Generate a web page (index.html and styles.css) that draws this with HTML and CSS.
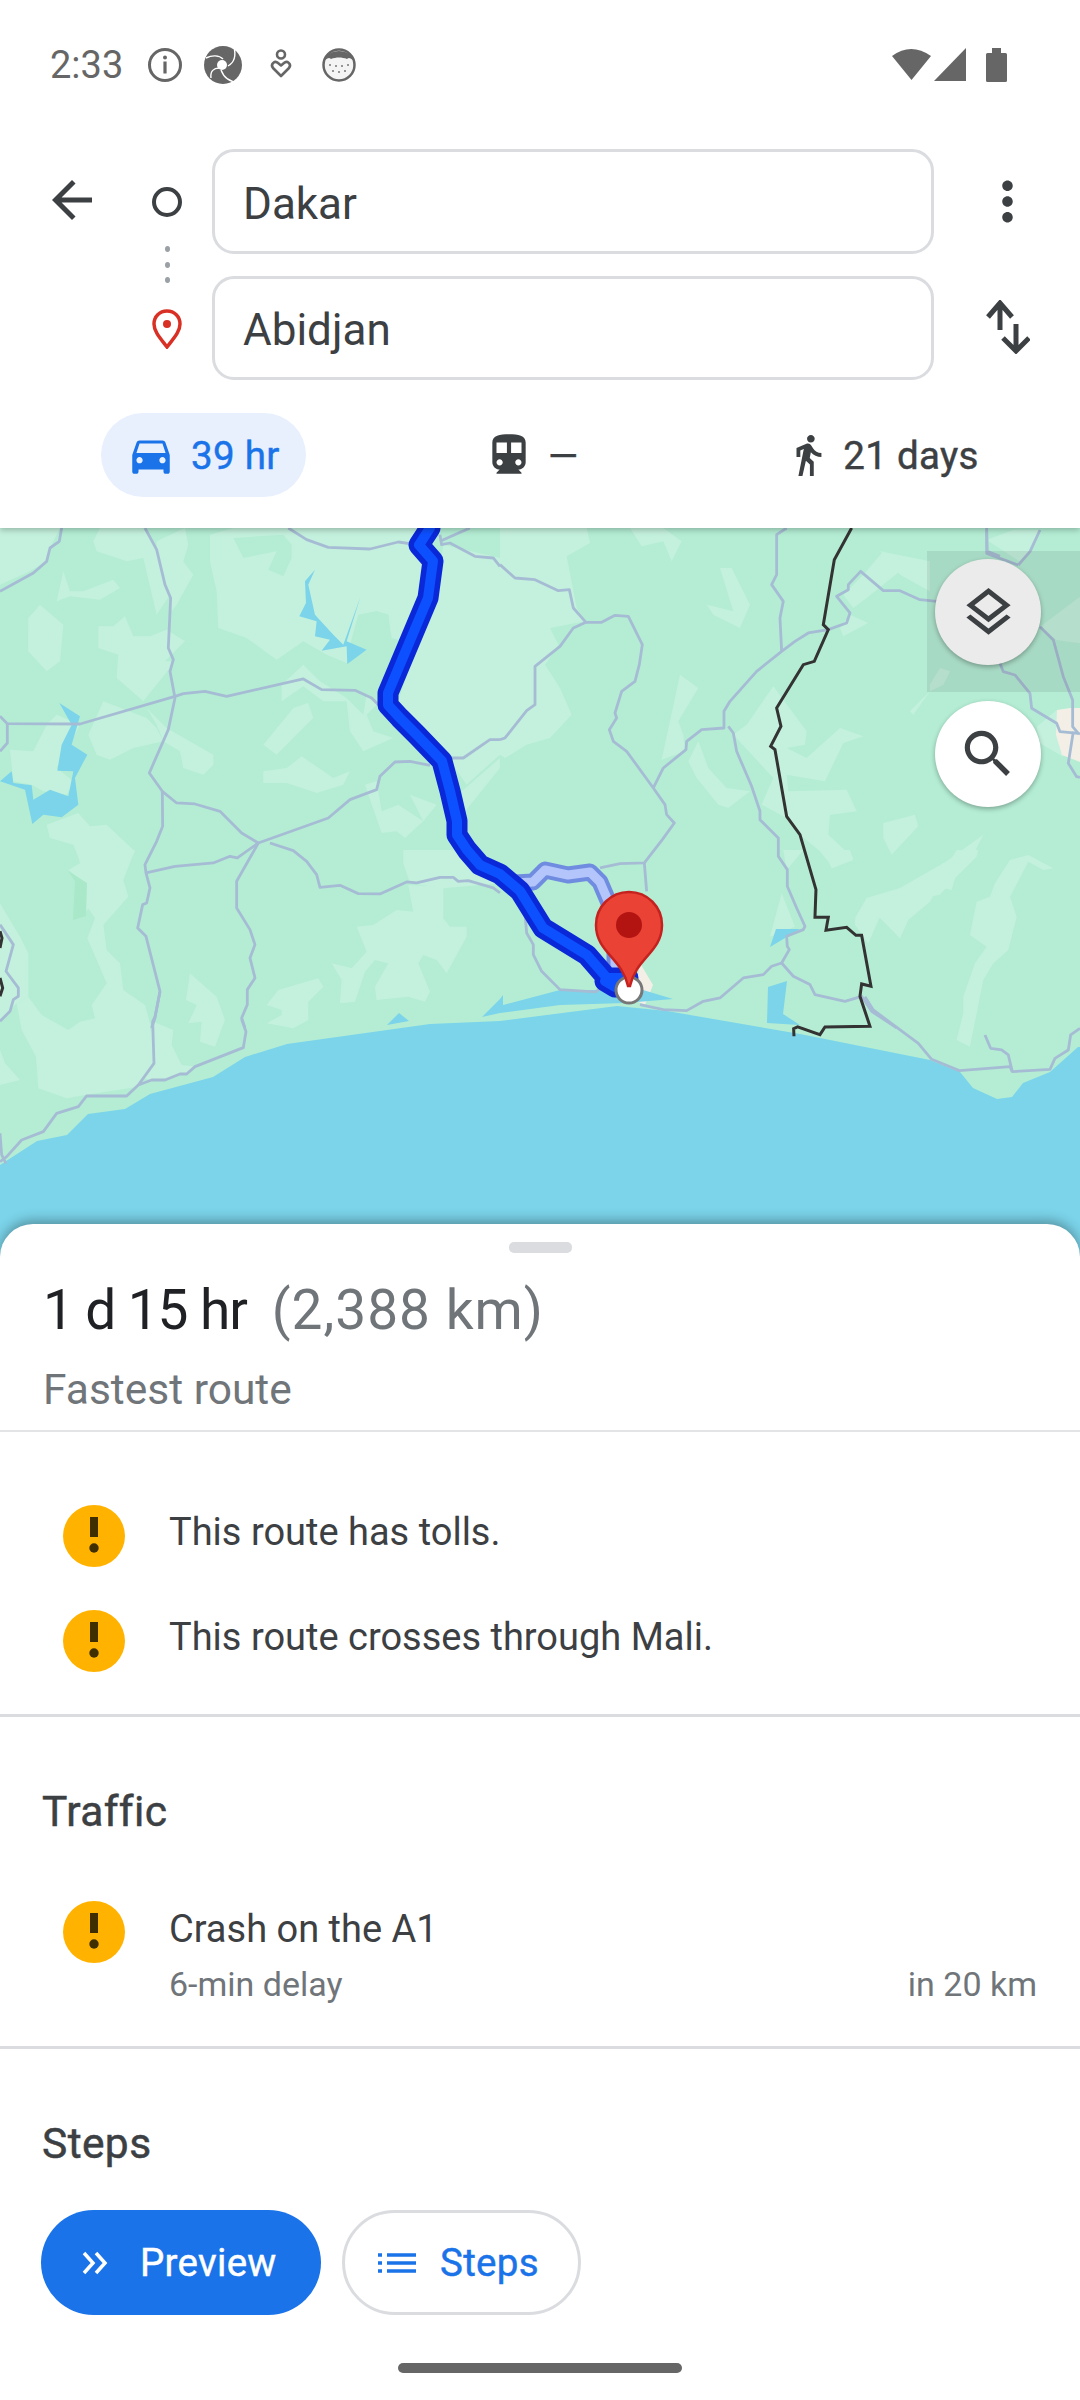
FILE: index.html
```html
<!DOCTYPE html>
<html lang="en">
<head>
<meta charset="utf-8">
<title>Directions</title>
<link rel="stylesheet" href="styles.css">
</head>
<body>
<div class="screen">
  <header class="header">
    <div class="status">
      <span class="time">2:33</span>
      <svg class="st" viewBox="0 0 40 40"><circle cx="20" cy="20" r="15.500" fill="none" stroke="#666" stroke-width="3"/><circle cx="20" cy="12.500" r="2" fill="#666"/><rect x="18.400" y="16.500" width="3.200" height="12" fill="#666"/></svg>
      <svg class="st" viewBox="0 0 40 40"><circle cx="20" cy="20" r="19" fill="#666"/><circle cx="19" cy="20" r="5" fill="#fff"/><path d="M3 13c6-3 13-3 17 1M31 2c2 8 1 15-6 19M8 33c-1-7 3-10 8-10M18 25c3 8 9 12 17 12" fill="none" stroke="#fff" stroke-width="1.400"/></svg>
      <svg class="st" viewBox="0 0 40 40"><circle cx="20" cy="9.500" r="4" fill="none" stroke="#666" stroke-width="2.600"/><path d="M20 31l-8-8c-3-4 2-8 5-5l3 2.500 3-2.500c3-3 8 1 5 5z" fill="none" stroke="#666" stroke-width="2.600" stroke-linejoin="round"/></svg>
      <svg class="st" viewBox="0 0 40 40"><circle cx="20" cy="20" r="15.500" fill="#f4f4f4" stroke="#666" stroke-width="2.500"/><path d="M6 15c3-12 25-12 28 0-3-2-4-3-6-1-5-2-11-2-16 0-2-2-3-1-6 1z" fill="#666"/><g fill="#777"><circle cx="11" cy="20" r="1"/><circle cx="17" cy="21" r="1"/><circle cx="23" cy="21" r="1"/><circle cx="29" cy="20" r="1"/><circle cx="14" cy="26" r="1"/><circle cx="20" cy="27" r="1"/><circle cx="26" cy="26" r="1"/></g></svg>
      <svg class="st-right" viewBox="0 0 115 34"><path d="M0 8Q19-6 39 8L19.500 32z" fill="#666"/><path d="M74 0V33H42z" fill="#666"/><path d="M94 6.500A1.500 1.500 0 0 1 95.500 5H100V0h9v5h4.500A1.500 1.500 0 0 1 115 6.500V32.500a1.500 1.500 0 0 1-1.500 1.500h-18A1.500 1.500 0 0 1 94 32.500z" fill="#666"/></svg>
    </div>

    <div class="route">
      <div class="back"><svg viewBox="0 0 24 24"><path d="M20 11H7.830l5.590-5.590L12 4l-8 8 8 8 1.410-1.410L7.830 13H20v-2z"/></svg></div>
      <div class="stops">
        <span class="origin"></span>
        <span class="dots"><i></i><i></i><i></i></span>
        <svg class="dest" viewBox="0 0 30 40"><path d="M15 2C7.500 2 2 7.800 2 15c0 8 7 15 13 23 6-8 13-15 13-23C28 7.800 22.500 2 15 2z" fill="#fff" stroke="#d93025" stroke-width="3.500"/><circle cx="15" cy="15" r="4" fill="#d93025"/></svg>
      </div>
      <div class="fields">
        <div class="field">Dakar</div>
        <div class="field">Abidjan</div>
      </div>
      <div class="actions">
        <svg class="more" viewBox="0 0 24 24"><path d="M12 8c1.100 0 2-.9 2-2s-.9-2-2-2-2 .9-2 2 .9 2 2 2zm0 2c-1.100 0-2 .9-2 2s.9 2 2 2 2-.9 2-2-.9-2-2-2zm0 6c-1.100 0-2 .9-2 2s.9 2 2 2 2-.9 2-2-.9-2-2-2z"/></svg>
        <svg class="swap" viewBox="0 0 46 54"><path d="M16 30V3M4 17L16 3l12 14M32 24v27M19 38l13 13 13-13" fill="none" stroke="#3c4043" stroke-width="5"/></svg>
      </div>
    </div>

    <div class="tabs">
      <div class="tab tab-on">
        <svg viewBox="0 0 24 24"><path d="M18.920 6.010C18.720 5.420 18.160 5 17.500 5h-11c-.66 0-1.210.42-1.420 1.010L3 12v8c0 .55.45 1 1 1h1c.55 0 1-.45 1-1v-1h12v1c0 .55.45 1 1 1h1c.55 0 1-.45 1-1v-8l-2.080-5.990zM6.500 16c-.83 0-1.500-.67-1.500-1.500S5.670 13 6.500 13s1.500.67 1.500 1.500S7.330 16 6.500 16zm11 0c-.83 0-1.500-.67-1.500-1.500s.67-1.500 1.500-1.500 1.500.67 1.500 1.500-.67 1.500-1.500 1.500zM5 11l1.500-4.500h11L19 11H5z"/></svg>
        <span>39 hr</span>
      </div>
      <div class="tab tab-transit">
        <svg viewBox="0 0 24 24"><path d="M12 2c-4.420 0-8 .5-8 4v9.500C4 17.430 5.570 19 7.500 19L6 20.500v.5h12v-.5L16.500 19c1.930 0 3.500-1.570 3.500-3.500V6c0-3.500-3.580-4-8-4zM7.500 17c-.83 0-1.500-.67-1.500-1.500S6.670 14 7.500 14s1.500.67 1.500 1.500S8.330 17 7.500 17zm3.500-6H6V6h5v5zm5.500 6c-.83 0-1.500-.67-1.500-1.500s.67-1.500 1.500-1.500 1.500.67 1.500 1.500-.67 1.500-1.500 1.500zm1.500-6h-5V6h5v5z"/></svg>
        <span>—</span>
      </div>
      <div class="tab tab-walk">
        <svg viewBox="0 0 24 24"><path d="M13.500 5.500c1.100 0 2-.9 2-2s-.9-2-2-2-2 .9-2 2 .9 2 2 2zM9.800 8.900L7 23h2.100l1.800-8 2.100 2v6h2v-7.500l-2.100-2 .6-3C14.800 12 16.800 13 19 13v-2c-1.900 0-3.500-1-4.300-2.400l-1-1.600c-.4-.6-1-1-1.700-1-.3 0-.5.1-.8.100L6 8.300V13h2V9.600l1.800-.7"/></svg>
        <span>21 days</span>
      </div>
    </div>
  </header>

  <main class="map">
    <svg class="map-art" viewBox="0 528 1080 740" preserveAspectRatio="none">
      <rect x="0" y="528" width="1080" height="740" fill="#b4edd4"/>

      <g class="light" transform="translate(0 528) scale(.3333)">
        <polygon points="0,0 180,0 150,60 140,100 90,130 0,170"/>
        <polygon points="280,40 300,0 430,0 475,70 510,200 470,260 430,90 380,100 290,70"/>
        <polygon points="470,40 555,0 565,50 550,100 580,140 530,230 515,250 510,210 490,160 470,80"/>
        <polygon points="170,220 190,130 210,190 250,190 340,155 360,180 300,215 210,205"/>
        <polygon points="85,270 120,230 190,290 180,400 140,430 85,370"/>
        <polygon points="295,295 340,295 375,265 400,325 450,325 500,305 555,340 495,400 515,400 510,420 430,520 350,450 355,380 295,360"/>
        <polygon points="630,20 700,0 1250,0 1245,70 1275,110 1255,210 1210,340 1175,330 1165,260 1130,250 1075,260 1050,350 1100,365 1040,405 980,380 910,340 830,395 740,330 655,300 650,190 630,100"/>
        <polygon points="1330,50 1500,90 1500,680 1400,770 1345,690 1265,600 1195,520 1320,130"/>
        <polygon points="440,540 500,600 640,680 640,710 610,740 550,720 540,670 490,640 470,590"/>
        <polygon points="30,665 100,670 140,590 170,560 240,590 210,650 170,720 220,760 200,800 130,790 95,770 40,760"/>
        <polygon points="265,620 310,520 440,570 470,600 490,640 400,660 330,695 290,680"/>
        <polygon points="140,890 235,855 270,895 320,890 405,970 390,1000 240,1000 220,950 150,930"/>
        <polygon points="790,650 880,540 925,525 940,570 900,610 830,680"/>
        <polygon points="790,730 860,720 905,685 1000,750 1050,730 1030,770 950,795 860,765 790,765"/>
        <polygon points="845,520 845,470 910,410 960,460 1040,510 1090,560 1100,500 1130,530 1100,560 1120,610 1180,630 1090,670 1050,610 1040,520 970,520 910,475"/>
        <polygon points="1095,770 1130,760 1145,850 1195,830 1270,880 1215,930 1190,910 1145,915"/>
        <polygon points="1230,800 1310,830 1270,880"/>
        <polygon points="1385,790 1500,690 1500,720 1420,820 1395,850"/>
      </g>
      <g fill="#b4edd4" transform="translate(0 528) scale(.3333)">
        <polygon points="700,30 850,20 875,50 875,90 850,145 805,125 830,70 730,90"/>
        <polygon points="1080,260 1130,250 1165,260 1170,330 1100,340 1075,300"/>
      </g>
      <g class="light" transform="translate(0 850) scale(.3333)">
        <polygon points="230,0 405,0 370,90 385,140 310,225 320,300 360,340 370,420 435,465 450,520 460,640 415,710 255,735 200,745 115,715 108,620 65,540 50,460 85,440 125,495 205,540 240,515 285,505 275,465 320,400 262,265 285,205 265,175 255,190 258,100 205,60 240,40"/>
        <polygon points="0,160 60,260 85,310 85,440 50,460 0,510"/>
        <polygon points="0,600 15,640 60,690 0,705"/>
        <polygon points="460,515 520,540 515,585 545,645 590,650 555,670 490,690 450,690 405,675 415,640 440,600"/>
        <polygon points="570,370 650,440 675,510 645,590 600,575 605,515 565,520 590,465 558,450"/>
        <polygon points="800,465 835,420 955,385 970,410 925,455 925,510 880,535 800,520 845,495 845,480"/>
        <polygon points="1070,230 1120,225 1190,180 1240,185 1225,105 1330,110 1330,205 1350,230 1400,230 1400,260 1340,370 1310,330 1270,315 1255,340 1290,425 1275,455 1225,440 1130,450 1125,410 1165,340 1125,330 1095,365 1065,455 1020,460 1025,390 995,340 1055,355 1100,305"/>
        <polygon points="1210,0 1360,0 1500,100 1330,115 1230,100 1210,40"/>
      </g>
      <g class="light" transform="translate(500 528) scale(.3333)">
        <polygon points="0,0 260,0 270,45 200,85 230,240 255,280 150,300 175,350 135,410 180,480 215,560 150,630 80,650 15,690 0,680"/>
        <polygon points="390,0 490,0 545,40 515,100 490,40 425,55"/>
        <polygon points="660,120 695,120 750,230 720,300 640,260 620,230 700,250"/>
        <polygon points="485,695 540,440 595,480 535,580 550,620 555,670"/>
        <polygon points="565,700 595,640 625,720 680,780 750,790 685,840 655,830 590,750"/>
        <polygon points="740,590 820,475 920,610 915,650 860,660 920,690 1020,600 1090,625 1030,645 975,760 860,740 865,790 1040,785 1070,850 925,870 990,860 985,920 1060,990 1000,1020 960,970 900,920 860,870 785,830 820,750 700,620"/>
        <polygon points="1150,885 1245,860 1255,895 1175,980 1150,930"/>
        <polygon points="1020,300 1050,260 1105,285 1030,325"/>
        <polygon points="1030,200 1090,140 1150,70 1200,130 1100,210 1060,240"/>
        <polygon points="1140,70 1290,100 1290,190 1200,140"/>
        <polygon points="1290,470 1320,420 1350,430 1330,470 1290,490"/>
        <polygon points="1230,550 1290,490 1240,560"/>
        <polygon points="1065,1170 1100,1110 1200,1080 1340,1000 1450,920 1410,1000 1320,1100 1210,1120 1200,1230 1140,1170 1090,1190"/>
      </g>
      <g class="light" transform="translate(700 850) scale(.3333)">
        <polygon points="465,210 510,145 560,140 640,100 660,80 720,80 770,0 835,0 830,20 765,85 755,120 715,110 690,155 625,210 600,265 540,200 505,280 465,225"/>
        <polygon points="790,440 825,340 860,290 810,255 830,155 870,140 885,100 930,30 985,15 1060,55 1030,60 985,35 930,140 950,200 925,300 880,340 850,390 810,590 770,570 790,490"/>
        <polygon points="210,260 245,130 285,230"/>
        <polygon points="250,0 310,0 260,60"/>
        <polygon points="370,0 450,0 460,30 395,55"/>
      </g>
      <g class="light" transform="translate(880 530) scale(.3333)">
        <polygon points="320,30 400,0 480,0 450,60 420,95"/>
        <polygon points="480,290 600,200 600,340 530,330"/>
        <polygon points="470,590 530,540 540,610 550,680 480,640"/>
      </g>

      <polygon fill="#a9e8c8" points="68,871 87,883 86,916 73,920 75,881"/>
      <polygon fill="#f3efe6" points="1057,710 1070,708 1080,708 1080,762 1062,755 1056,735"/>
      <polygon fill="#f3efe6" points="640,963 653,985 645,1005 634,1000"/>

      <g fill="#7bd4ea">
        <polygon points="0,1165 37,1141 67,1135 88,1114 125,1109 150,1094 213,1077 245,1057 287,1044 430,1024 500,1021 617,1006 667,1011 800,1034 930,1060 960,1072 973,1088 997,1099 1012,1097 1023,1083 1050,1072 1078,1047 1080,1047 1080,1268 0,1268"/>
        <polygon points="482,1017 500,999 503,995 503,1005 560,990 643,990 673,999 625,1003 560,1005 500,1013"/>
        <polygon points="387,1025 399,1013 409,1021"/>
        <polygon points="770,947 776,929 800,929"/>
        <polygon points="768,987 787,981 783,1014 800,1025 767,1023"/>
      </g>
      <g fill="#7bd4ea" transform="translate(0 528) scale(.3333)">
        <polygon points="915,160 945,125 925,170 945,260 1000,320 1030,350 1082,205 1040,340 1100,365 1042,408 1040,355 965,368 990,335 945,325 950,280 898,265 918,225"/>
        <polygon points="178,525 240,565 215,650 262,680 225,750 235,830 185,868 130,860 97,888 75,785 0,760 35,730 40,765 95,772 100,815 150,785 205,805 220,730 172,728 185,650 215,590"/>
      </g>

      <g class="roads" transform="translate(0 528) scale(.3333)">
        <polyline points="185,0 178,40 150,60 140,100 100,135 0,190"/>
        <polyline points="435,0 470,65 495,170 512,210 505,360 520,395 510,430 525,510 505,605 448,735 487,790 530,825 585,828 660,850 725,915 775,945 710,1060 710,1140 750,1205 765,1250 750,1290 765,1350 742,1385 742,1430 725,1470 735,1500"/>
        <polyline points="0,565 22,587 240,588 525,505 550,497 615,490 680,505 910,453 965,485 1065,487 1115,510 1145,540"/>
        <polyline points="22,587 22,645 0,670"/>
        <polyline points="487,790 488,895 470,940 435,1010 438,1035 450,1080 440,1125 428,1130 413,1200 438,1225 480,1390 465,1470 455,1500"/>
        <polyline points="438,1035 525,1015 640,1005 690,985 712,990 775,945 985,870 1050,815 1130,785 1140,745 1185,702 1230,700 1290,712"/>
        <polyline points="810,945 880,968 920,1000 950,1040 960,1078 1020,1072 1075,1097 1140,1098 1220,1062 1250,1065 1320,1048 1360,1048 1375,1060 1405,1058 1480,1080 1500,1095"/>
        <polyline points="865,0 920,35 985,58 1110,63 1195,42 1250,50"/>
        <polyline points="1320,20 1325,50 1350,45 1425,85 1480,90 1500,115"/>
        <polyline points="1320,40 1410,0"/>
        <polyline points="1350,690 1390,690 1470,635 1500,635"/>
        <polyline points="0,1190 40,1250 18,1330 55,1380 55,1405 40,1415 30,1450 0,1480"/>
      </g>
      <g class="roads" transform="translate(0 850) scale(.3333)">
        <polyline points="480,425 465,500 458,515 462,640 415,705 380,738 260,738 235,770 170,790 130,845 65,870 20,920 0,935"/>
        <polyline points="415,705 455,690 495,690 540,672 560,672 585,650 730,593 738,545 725,508"/>
        <polyline points="0,850 5,915 18,940"/>
      </g>
      <g class="roads" transform="translate(500 528) scale(.3333)">
        <polyline points="0,110 45,150 105,155 175,188 208,185 220,240 258,283 305,283 345,262 385,265 427,350 418,410 405,460 365,490 345,555 350,570 328,605 340,640 380,670 460,780 495,830 500,860 523,885 487,935 433,1005 360,1007 300,1020"/>
        <polyline points="258,283 220,300 180,355 105,415 105,530 80,548 15,630 0,635"/>
        <polyline points="433,1005 440,1090"/>
        <polyline points="460,780 490,720 558,665 560,640 605,605 672,600 672,550 690,520 770,430 845,370 885,340 925,315 985,305 1040,285 1050,255 1010,205 1045,185 1045,170 1082,130 1150,188 1200,188 1260,215 1310,220"/>
        <polyline points="845,370 840,270 850,220 815,170 830,140 830,20 860,0"/>
        <polyline points="685,595 700,615 710,670 755,775 780,850 780,875 835,930 835,985 862,1025 862,1075 890,1140 915,1195 910,1205 860,1225 862,1255 868,1265 845,1305 815,1315 790,1340 730,1350 660,1410 610,1420 560,1448 490,1445 420,1430"/>
        <polyline points="845,1305 880,1345 930,1370 945,1400 1035,1420 1085,1405 1115,1450 1190,1500"/>
        <polyline points="75,1160 80,1215 100,1250 100,1280 125,1330 180,1385 285,1392 305,1380"/>
        <polyline points="1460,0 1462,70 1500,85"/>
      </g>
      <g class="roads" transform="translate(700 850) scale(.3333)">
        <polyline points="495,440 520,480 655,580 695,628 778,662 930,650 937,665 1050,658 1065,625 1105,600 1112,555 1140,535"/>
        <polyline points="855,555 872,595 905,600 925,615 937,665"/>
      </g>
      <g class="roads" transform="translate(880 530) scale(.3333)">
        <polyline points="415,105 450,65 480,0"/>
        <polyline points="320,0 320,70 415,105"/>
        <polyline points="480,290 520,330 550,440 578,510 578,590 595,610 600,612"/>
        <polyline points="360,400 370,425 405,435 450,490 455,535 530,580 540,605 595,610"/>
        <polyline points="580,605 565,700 590,740 600,742"/>
      </g>
      <g class="border" transform="translate(500 528) scale(.3333)">
        <polyline points="1055,0 1003,95 970,290 985,305 943,400 910,410 830,540 843,595 812,655 825,665 860,865 900,920 948,1085 945,1168 985,1168 978,1207 1040,1198 1068,1222 1085,1222 1113,1375 1085,1368 1080,1405 1110,1495 975,1497 960,1520 893,1497 881,1502 882,1525"/>
      </g>
      <g class="border" transform="translate(0 528) scale(.3333)">
        <polyline points="0,1210 6,1230 0,1260"/>
        <polyline points="0,1350 8,1380 0,1405"/>
      </g>

      <polyline class="alt-out" points="515,883 533,882 545,870 568,875 590,872 600,882 615,917 615,973"/>
      <polyline class="alt-in" points="515,883 533,882 545,870 568,875 590,872 600,882 615,917 615,973"/>
      <polyline class="main-out" points="430,528 419,545 433,561 428,598 388,693 388,705 400,718 417,735 442,761 450,791 457,821 457,835 467,850 480,865 500,874 520,891 543,928 587,955 607,978 628,978 605,981 615,987"/>
      <polyline class="main-in" points="430,528 419,545 433,561 428,598 388,693 388,705 400,718 417,735 442,761 450,791 457,821 457,835 467,850 480,865 500,874 520,891 543,928 587,955 607,978 628,978 605,981 615,987"/>
      <circle cx="629" cy="990" r="13" fill="#fff" stroke="#777" stroke-width="3"/>
      <path d="M629 892c-18.500 0-33 15-33 33 0 27 26 33 32 61h2c6-28 32-34 32-61 0-18-14.500-33-33-33z" fill="#ea4335" stroke="#c5221f" stroke-width="2.500"/>
      <circle cx="629" cy="925" r="13" fill="#b31412"/>
    </svg>
    <div class="layer-wrap">
      <button class="fab fab-layers"><svg viewBox="0 0 24 24"><path d="M11.990 18.540l-7.370-5.730L3 14.070l9 7 9-7-1.630-1.270-7.380 5.740zM12 16l7.360-5.730L21 9l-9-7-9 7 1.630 1.270L12 16zm0-11.470L17.740 9 12 13.470 6.260 9 12 4.530z"/></svg></button>
    </div>
    <button class="fab fab-search"><svg viewBox="0 0 24 24"><path d="M15.500 14h-.79l-.28-.27C15.410 12.590 16 11.110 16 9.500 16 5.910 13.090 3 9.500 3S3 5.910 3 9.500 5.910 16 9.500 16c1.610 0 3.090-.59 4.230-1.570l.27.28v.79l5 4.990L20.490 19l-4.990-5zm-6 0C7.010 14 5 11.990 5 9.500S7.010 5 9.500 5 14 7.010 14 9.500 11.990 14 9.500 14z"/></svg></button>
  </main>

  <section class="sheet">
    <div class="handle"></div>
    <div class="summary"><span class="dur">1 d 15 hr</span><span class="dist">(2,388 km)</span></div>
    <div class="sub">Fastest route</div>
    <div class="rule-thin"></div>

    <div class="alerts">
      <div class="alert">
        <svg class="warn" viewBox="0 0 62 62"><circle cx="31" cy="31" r="31" fill="#ffb300"/><rect x="27" y="12" width="8" height="20" fill="#3f2e00"/><circle cx="31" cy="43" r="4.700" fill="#3f2e00"/></svg>
        <span class="alert-text">This route has tolls.</span>
      </div>
      <div class="alert">
        <svg class="warn" viewBox="0 0 62 62"><circle cx="31" cy="31" r="31" fill="#ffb300"/><rect x="27" y="12" width="8" height="20" fill="#3f2e00"/><circle cx="31" cy="43" r="4.700" fill="#3f2e00"/></svg>
        <span class="alert-text">This route crosses through Mali.</span>
      </div>
    </div>
    <div class="rule"></div>

    <h2 class="head head-traffic">Traffic</h2>
    <div class="incident">
      <svg class="warn" viewBox="0 0 62 62"><circle cx="31" cy="31" r="31" fill="#ffb300"/><rect x="27" y="12" width="8" height="20" fill="#3f2e00"/><circle cx="31" cy="43" r="4.700" fill="#3f2e00"/></svg>
      <div class="incident-body">
        <div class="alert-text">Crash on the A1</div>
        <div class="incident-meta"><span>6-min delay</span><span>in 20 km</span></div>
      </div>
    </div>
    <div class="rule rule-b"></div>

    <h2 class="head head-steps">Steps</h2>
    <div class="buttons">
      <button class="btn btn-primary"><svg viewBox="0 0 30 24"><path d="M3 2l9 10-9 10M15 2l9 10-9 10" fill="none" stroke="#fff" stroke-width="3.500"/></svg>Preview</button>
      <button class="btn btn-outline"><svg viewBox="0 0 38 22"><path d="M9 3h29M9 11h29M9 19h29" stroke="#1a73e8" stroke-width="3.500"/><path d="M0 3h4M0 11h4M0 19h4" stroke="#1a73e8" stroke-width="3.500"/></svg>Steps</button>
    </div>
    <div class="home"></div>
  </section>
</div>
</body>
</html>
```
FILE: styles.css
```css
* { box-sizing: border-box; }
html, body { margin: 0; padding: 0; }
body { font-family: Roboto, "Liberation Sans", sans-serif; background: #fff; }
.screen { width: 1080px; height: 2400px; overflow: hidden; display: flex; flex-direction: column; position: relative; background: #fff; }

.header { height: 528px; flex: none; background: #fff; position: relative; z-index: 3; box-shadow: 0 2px 6px rgba(0,0,0,.25); }
.status { height: 130px; display: flex; align-items: center; padding-left: 50px; }
.time { width: 95px; font-size: 38px; color: #666; }
.st { width: 40px; height: 40px; margin-right: 18px; }
.st-right { width: 115px; height: 34px; margin-left: auto; margin-right: 73px; }

.route { display: flex; padding-top: 19px; height: 250px; }
.back { width: 122px; padding: 21px 0 0 42px; flex: none; }
.back svg { width: 60px; height: 60px; fill: #3c4043; display: block; }
.stops { width: 90px; flex: none; display: flex; flex-direction: column; align-items: center; padding-top: 38px; }
.origin { width: 30px; height: 30px; border: 4px solid #3c4043; border-radius: 50%; }
.dots { display: flex; flex-direction: column; gap: 9.500px; margin-top: 29px; }
.dots i { width: 5px; height: 6px; border-radius: 50%; background: #9aa0a6; display: block; }
.dest { width: 30px; height: 40px; margin-top: 26px; }
.fields { width: 722px; flex: none; display: flex; flex-direction: column; gap: 22px; }
.field { height: 105px; border: 3.500px solid #dadce0; border-radius: 22px; padding: 5px 0 0 28px; display: flex; align-items: center; font-size: 44px; color: #3c4043; }
.actions { flex: 1; display: flex; flex-direction: column; align-items: center; }
.more { width: 63px; height: 63px; fill: #3c4043; margin-top: 21px; }
.swap { width: 46px; height: 54px; margin-top: 67px; }

.tabs { display: flex; margin-top: 33px; padding-left: 101px; height: 84px; }
.tab { display: flex; align-items: center; font-size: 38.500px; font-weight: 400; letter-spacing: .3px; -webkit-text-stroke: .45px currentColor; color: #3c4043; }
.tab-on { width: 205px; background: #e8f0fe; border-radius: 42px; color: #1a73e8; padding-left: 25px; gap: 15px; }
.tab svg { width: 50px; height: 50px; fill: currentColor; flex: none; }
.tab-transit { margin-left: 178px; gap: 14px; }
.tab-walk { margin-left: 207px; gap: 12px; }
.tab-walk svg { width: 46px; height: 46px; }

.map { height: 740px; margin-bottom: -44px; flex: none; position: relative; z-index: 1; }
.map-art { display: block; width: 1080px; height: 740px; }
.light { fill: #c4f1dd; }
.roads polyline { fill: none; stroke: #a6bcd4; stroke-width: 2.800; vector-effect: non-scaling-stroke; stroke-linejoin: round; }
.border polyline { fill: none; stroke: #333; stroke-width: 3; vector-effect: non-scaling-stroke; }
.alt-out, .alt-in, .main-out, .main-in { fill: none; stroke-linejoin: round; stroke-linecap: round; }
.alt-out { stroke: #6f8ce0; stroke-width: 17; }
.alt-in { stroke: #b4c5fb; stroke-width: 9; }
.main-out { stroke: #0a28d8; stroke-width: 21; }
.main-in { stroke: #0d50ff; stroke-width: 10; }

.layer-wrap { position: absolute; left: 927px; top: 23px; width: 153px; height: 141px; background: rgba(60,60,60,.1); padding: 8px 0 0 8px; }
.fab { width: 106px; height: 106px; border: 0; border-radius: 50%; padding: 0; display: flex; align-items: center; justify-content: center; box-shadow: 0 2px 5px rgba(0,0,0,.3); }
.fab svg { fill: #3c4043; display: block; }
.fab-layers { background: #ebebeb; }
.fab-layers svg { width: 59px; height: 59px; }
.fab-search { position: absolute; left: 935px; top: 173px; background: #fff; }
.fab-search svg { width: 62px; height: 62px; }

.sheet { flex: 1; background: #fff; position: relative; z-index: 2; border-radius: 33px 33px 0 0; box-shadow: 0 -4px 12px rgba(0,0,0,.3); display: flex; flex-direction: column; }
.handle { width: 63px; height: 11px; border-radius: 5px; background: #dadce0; margin: 18px auto 0; flex: none; }
.summary { margin-top: 25px; padding-left: 43px; display: flex; gap: 25px; font-size: 55px; line-height: 64px; }
.dur { color: #202124; letter-spacing: -1.100px; }
.dist { color: #70757a; letter-spacing: 1px; }
.sub { margin-top: 22px; padding-left: 43px; font-size: 42.500px; line-height: 52px; color: #70757a; }
.rule-thin { height: 2px; background: #e3e4e6; margin-top: 14px; flex: none; }
.rule { height: 3px; background: #dadce0; margin-top: 42px; flex: none; }
.rule-b { margin-top: 40px; }
.alerts { padding: 73px 43px 0 63px; display: flex; flex-direction: column; gap: 43px; }
.alert { display: flex; align-items: flex-start; gap: 44px; height: 62px; }
.warn { width: 62px; height: 62px; flex: none; display: block; }
.alert-text { font-size: 38px; line-height: 52px; color: #3c4043; padding-top: 1px; }
.head { margin: 0; padding-left: 42px; font-size: 42.500px; font-weight: 400; letter-spacing: .4px; -webkit-text-stroke: .5px currentColor; line-height: 56px; color: #3c4043; }
.head-traffic { margin-top: 67px; }
.head-steps { margin-top: 67px; }
.incident { display: flex; gap: 44px; margin-top: 61px; padding: 0 43px 0 63px; }
.incident-body { flex: 1; padding-top: 1px; }
.incident-meta { display: flex; justify-content: space-between; margin-top: 7px; font-size: 34px; line-height: 44px; color: #70757a; }
.buttons { display: flex; gap: 21px; padding-left: 41px; margin-top: 38px; }
.btn { height: 105px; border-radius: 53px; display: flex; align-items: center; font: 400 38.500px Roboto, sans-serif; letter-spacing: .3px; -webkit-text-stroke: .45px currentColor; padding: 0; }
.btn svg { flex: none; display: block; }
.btn-primary { width: 280px; background: #1a73e8; border: 0; color: #fff; padding-left: 40px; gap: 29px; }
.btn-primary svg { width: 30px; height: 24px; }
.btn-outline { width: 239px; background: #fff; border: 3px solid #dadce0; color: #1a73e8; padding-left: 33px; gap: 24px; }
.btn-outline svg { width: 38px; height: 22px; }
.home { width: 284px; height: 10px; border-radius: 5px; background: #666; margin: 48px auto 0; flex: none; }
```
